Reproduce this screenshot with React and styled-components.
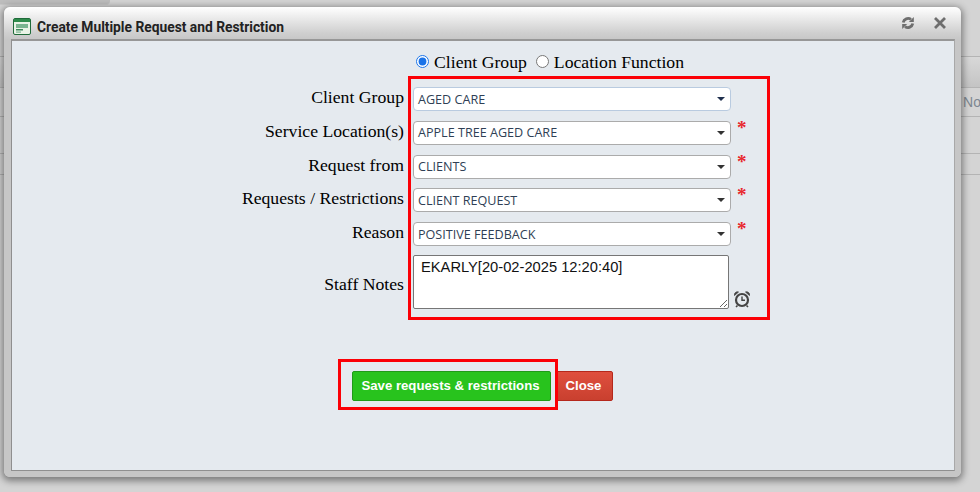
import React from "react";
import styled, { createGlobalStyle } from "styled-components";

const Global = createGlobalStyle`
  html, body { margin: 0; padding: 0; width: 980px; height: 492px; overflow: hidden; background: #d3d3d3; }
`;

const Page = styled.div`
  position: relative;
  width: 980px;
  height: 492px;
  overflow: hidden;
  background: #d4d4d4;
`;

const BackRows = styled.div`
  display: flex;
  flex-direction: column;
`;

const BackTop = styled.div`
  height: 4px;
  width: 110px;
  background: #bdbdbd;
  border-bottom: 1px solid #c8c8c8;
  border-radius: 0 0 4px 0;
  margin-bottom: 50px;
`;

const BackRow = styled.div`
  height: ${(p) => p.$h}px;
  border-bottom: 1px solid #b4b4b4;
  box-sizing: border-box;
  background: ${(p) => (p.$shade ? "linear-gradient(#d8d8d8,#c4c4c4)" : "transparent")};
  font: 14px "Liberation Sans", sans-serif;
  color: #7d8791;
  display: flex;
  justify-content: space-between;
  align-items: center;
  overflow: hidden;
  white-space: nowrap;
`;

const BackClipped = styled.span`
  margin: ${(p) => (p.$left ? "0 0 0 -4px" : "0 -1px 0 0")};
  color: ${(p) => (p.$left ? "#a08a70" : "#7d8791")};
`;

const Window = styled.div`
  position: absolute;
  left: 4px;
  top: 7px;
  width: 957px;
  height: 470px;
  box-sizing: border-box;
  display: flex;
  flex-direction: column;
  padding: 0 6px 6px 7px;
  border-radius: 6px;
  background: linear-gradient(#ffffff 0, #cfcfcf 26px, #c6c6c6 33px, #c6c6c6 100%);
  box-shadow: 0 2px 7px 2px rgba(0,0,0,.42);
`;

const TitleBar = styled.div`
  height: 32px;
  flex: none;
  display: flex;
  align-items: center;
  padding-left: 2px;
  padding-top: 7px;
  box-sizing: border-box;
`;

const Title = styled.h1`
  margin: 0 0 0 6px;
  font: bold 13.8px/16px Roboto, "Liberation Sans", sans-serif;
  color: #222;
  flex: 1;
`;

const ToolIcon = styled.svg`
  flex: none;
  margin: 0 ${(p) => p.$mr}px 8px 0;
  display: block;
`;

const Body = styled.div`
  flex: 1;
  background: #e5eaef;
  border: 1px solid #8f8f8f;
  border-right-color: #a8a8a8;
  border-top: 2px solid #979797;
  display: flex;
  flex-direction: column;
  align-items: flex-start;
  box-sizing: border-box;
  padding-top: 10px;
  position: relative;
`;

const RadioRow = styled.div`
  display: flex;
  align-items: center;
  margin-left: 404px;
  height: 22px;
  font: 17.7px "Liberation Serif", serif;
  color: #000;
`;

const RadioLabel = styled.label`
  display: flex;
  align-items: center;
  margin-right: 9px;
  input { margin: 0 5px 2px 0; width: 13px; height: 13px; accent-color: #1a73e8; }
`;

const FormGrid = styled.div`
  display: grid;
  grid-template-columns: 392px 318px 40px;
  column-gap: 9px;
  margin-top: 14px;
  font: 17.7px "Liberation Serif", serif;
  color: #000;
`;

const Label = styled.div`
  grid-column: 1;
  text-align: right;
  height: 33.75px;
  line-height: 20px;
  ${(p) => p.$tall && "height: 64px; line-height: 56px;"}
`;

const Select = styled.div`
  grid-column: 2;
  height: 24px;
  box-sizing: border-box;
  background: #fff;
  border: 1px solid ${(p) => (p.$blue ? "#b9cbe0" : "#ababab")};
  border-radius: 4px;
  display: flex;
  align-items: center;
  justify-content: space-between;
  padding: 0 5px 0 4px;
  font: 12.6px "Open Sans", "Liberation Sans", sans-serif;
  color: #2f3f55;
`;

const Caret = styled.span`
  width: 0;
  height: 0;
  border-left: 4px solid transparent;
  border-right: 4px solid transparent;
  border-top: 4px solid ${(p) => (p.$blue ? "#20304e" : "#333")};
`;

const Star = styled.div`
  grid-column: 3;
  color: #e8262c;
  font: bold 19px/20px "Liberation Serif", serif;
  margin: -3px 0 0 -3px;
`;

const NotesCell = styled.div`
  grid-column: 2 / span 2;
  display: flex;
  align-items: flex-end;
  height: 64px;
`;

const Notes = styled.textarea`
  width: 316px;
  height: 54px;
  box-sizing: border-box;
  margin: -1px 0 0;
  padding: 3px 7px;
  border: 1px solid #767676;
  border-radius: 2px;
  background: #fff;
  font: 14.7px "Liberation Sans", sans-serif;
  color: #111;
  outline: none;
  display: block;
  align-self: flex-start;
`;

const Alarm = styled.svg`
  margin: 0 0 12px 4px;
  display: block;
`;

const Buttons = styled.div`
  display: flex;
  margin: 51px 0 0 340px;
`;

const Button = styled.button`
  height: 30px;
  box-sizing: border-box;
  padding: 0 2px 0 0;
  width: ${(p) => p.$w}px;
  margin-left: ${(p) => p.$ml || 0}px;
  border-radius: 2px;
  border: 1px solid ${(p) => p.$border};
  background: ${(p) => p.$bg};
  color: #fff;
  font: bold 13.2px "Liberation Sans", sans-serif;
`;

const Annotation = styled.div`
  position: absolute;
  left: ${(p) => p.$x}px;
  top: ${(p) => p.$y}px;
  width: ${(p) => p.$w}px;
  height: ${(p) => p.$h}px;
  box-sizing: border-box;
  border: 3px solid #fb0006;
  pointer-events: none;
`;

const fields = [
  { label: "Client Group", value: "AGED CARE", blue: true },
  { label: "Service Location(s)", value: "APPLE TREE AGED CARE", req: true },
  { label: "Request from", value: "CLIENTS", req: true },
  { label: "Requests / Restrictions", value: "CLIENT REQUEST", req: true },
  { label: "Reason", value: "POSITIVE FEEDBACK", req: true },
];

export default function App() {
  return (
    <Page>
      <Global />
      <BackRows>
        <BackTop />
        <BackRow $h={2} />
        <BackRow $h={31} $shade />
        <BackRow $h={29}>
          <BackClipped $left>f</BackClipped>
          <BackClipped>No</BackClipped>
        </BackRow>
        <BackRow $h={37} />
        <BackRow $h={21} />
      </BackRows>
      <Window>
        <TitleBar>
          <svg width="18" height="18" viewBox="0 0 18 18">
            <rect x="0.5" y="0.5" width="17" height="16" rx="1.5" fill="#e9f3e6" stroke="#1f6b3a" />
            <rect x="1" y="1" width="16" height="3" fill="#2e8b4b" />
            <rect x="3" y="6" width="12" height="4" fill="#79b48f" />
            <rect x="3" y="11" width="7" height="1.5" fill="#3f8a5d" />
            <rect x="3" y="13.5" width="5" height="1.2" fill="#79b48f" />
          </svg>
          <Title>Create Multiple Request and Restriction</Title>
          <ToolIcon $mr={18} width="14" height="14" viewBox="0 0 14 14" fill="none" stroke="#6e6e6e" strokeWidth="2.8">
            <path d="M2.2 6.5A5 5 0 0 1 10 3.4" />
            <path d="M11.8 7.5A5 5 0 0 1 4 10.6" />
            <path d="M12.8 1v5H7.8z" fill="#6e6e6e" stroke="none" />
            <path d="M1.2 13V8h5z" fill="#6e6e6e" stroke="none" />
          </ToolIcon>
          <ToolIcon $mr={8} width="14" height="14" viewBox="0 0 14 14" fill="none" stroke="#6e6e6e" strokeWidth="2.8">
            <path d="M2 2l10 10M12 2L2 12" />
          </ToolIcon>
        </TitleBar>
        <Body>
          <RadioRow>
            <RadioLabel><input type="radio" name="m" defaultChecked />Client Group</RadioLabel>
            <RadioLabel><input type="radio" name="m" />Location Function</RadioLabel>
          </RadioRow>
          <FormGrid>
            {fields.map((f) => (
              <React.Fragment key={f.label}>
                <Label>{f.label}</Label>
                <Select $blue={f.blue}>
                  {f.value}
                  <Caret $blue={f.blue} />
                </Select>
                <Star>{f.req ? "*" : ""}</Star>
              </React.Fragment>
            ))}
            <Label $tall>Staff Notes</Label>
            <NotesCell>
              <Notes defaultValue="EKARLY[20-02-2025 12:20:40]" />
              <Alarm width="18" height="18" viewBox="0 0 18 18" fill="none" stroke="#444">
                <circle cx="9" cy="10" r="6" strokeWidth="2.2" />
                <path d="M9 6.5V10.3H12" strokeWidth="1.4" />
                <path d="M1.5 5.5A3 3 0 0 1 5.5 2ZM16.5 5.5A3 3 0 0 0 12.5 2Z" fill="#444" strokeWidth="0.8" />
                <path d="M4.5 15.5L3 17M13.5 15.5L15 17" strokeWidth="1.6" />
              </Alarm>
            </NotesCell>
          </FormGrid>
          <Buttons>
            <Button $w={199} $bg="#28c31d" $border="#209a18">Save requests &amp; restrictions</Button>
            <Button $w={57} $ml={5} $bg="linear-gradient(#df4f3e,#c9402f)" $border="#b5281c">Close</Button>
          </Buttons>
          <Annotation $x={396} $y={35} $w={362} $h={244} />
          <Annotation $x={326} $y={318} $w={220} $h={51} />
        </Body>
      </Window>
    </Page>
  );
}
